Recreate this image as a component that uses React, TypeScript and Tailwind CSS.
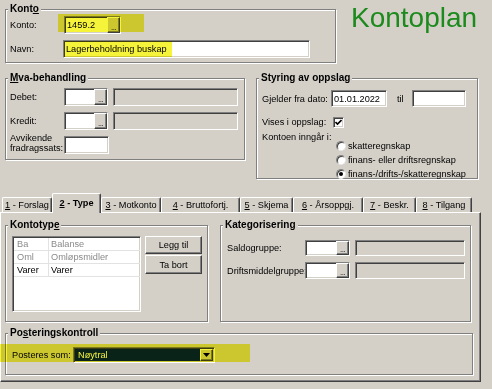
import React from "react";

const sunken =
  "border border-t-[#808080] border-l-[#808080] border-b-white border-r-white shadow-[inset_1px_1px_0_#404040,inset_-1px_-1px_0_#d4d0c8]";
const raised =
  "border border-t-white border-l-white border-b-[#404040] border-r-[#404040] shadow-[inset_-1px_-1px_0_#808080]";

function Group({
  title,
  className,
  children,
}: {
  title: React.ReactNode;
  className: string;
  children?: React.ReactNode;
}) {
  return (
    <div
      className={
        "relative border border-[#808080] shadow-[inset_1px_1px_0_#ffffff,1px_1px_0_#ffffff] " +
        className
      }
    >
      <div className="absolute left-[2px] -top-[7px] bg-[#d4d0c8] px-[2px] font-bold text-[10px] leading-[12px] whitespace-nowrap">
        {title}
      </div>
      {children}
    </div>
  );
}

function DotsBtn() {
  return (
    <div className={raised + " w-[13px] h-full bg-[#d4d0c8] flex items-end justify-center"}>
      <span className="text-[8px] leading-[9px] tracking-[-0.5px]">...</span>
    </div>
  );
}

function Lookup({ className }: { className: string }) {
  return (
    <div className={sunken + " flex bg-white " + className}>
      <div className="flex-1" />
      <DotsBtn />
    </div>
  );
}

function Tab({
  n,
  label,
  className,
  selected,
}: {
  n: string;
  label: string;
  className: string;
  selected?: boolean;
}) {
  if (selected) {
    return (
      <div
        className={
          "relative z-10 -mb-[1px] h-[20px] bg-[#d4d0c8] border-t border-l border-t-white border-l-white border-r border-r-[#404040] shadow-[inset_-1px_0_0_#808080] rounded-t-[2px] flex items-center justify-center font-bold pb-[2px] " +
          className
        }
      >
        <span className="whitespace-nowrap">
          <u>{n}</u> - {label}
        </span>
      </div>
    );
  }
  return (
    <div
      className={
        "h-[15px] border-t border-l border-t-white border-l-white border-r border-r-[#404040] shadow-[inset_-1px_0_0_#808080] rounded-t-[2px] flex items-center justify-center " +
        className
      }
    >
      <span className="whitespace-nowrap">
        <u>{n}</u> - {label}
      </span>
    </div>
  );
}

function Radio({ checked, label }: { checked?: boolean; label: string }) {
  return (
    <div className="flex items-center h-[13px]">
      <div className="w-[10px] h-[10px] rounded-full bg-white border border-t-[#808080] border-l-[#808080] border-b-[#e8e8e8] border-r-[#e8e8e8] shadow-[inset_1px_1px_0_#404040] flex items-center justify-center">
        {checked && <div className="w-[4px] h-[4px] rounded-full bg-black" />}
      </div>
      <span className="ml-[2px] whitespace-nowrap">{label}</span>
    </div>
  );
}

export default function App() {
  return (
    <div className="relative w-[492px] h-[389px] overflow-hidden bg-[#d4d0c8] text-black text-[9.2px] leading-[12px] font-['Liberation_Sans',Arial,sans-serif]">
      {/* Row 1 */}
      <div className="flex items-start">
        <Group
          title={
            <>
              Kont<u>o</u>
            </>
          }
          className="mt-[9px] ml-[5px] w-[331px] h-[54px] pl-[4px] pt-[6px]"
        >
          <div className="flex items-center h-[18px]">
            <span className="w-[54px]">Konto:</span>
            <div className={sunken + " w-[57px] h-[18px] bg-white flex"}>
              <div className="flex-1 flex items-center pl-[2px]">1459.2</div>
              <DotsBtn />
            </div>
          </div>
          <div className="flex items-center h-[18px] mt-[6px]">
            <span className="w-[53px]">Navn:</span>
            <div className={sunken + " w-[247px] h-[18px] bg-white flex items-center pl-[2px]"}>
              Lagerbeholdning buskap
            </div>
          </div>
        </Group>
        <div className="ml-[15px] mt-[4px] text-[28px] leading-[28px] text-[#1c8a1c]">
          Kontoplan
        </div>
      </div>

      {/* Row 2 */}
      <div className="flex items-start mt-[15px]">
        <Group
          title={
            <>
              <u>M</u>va-behandling
            </>
          }
          className="ml-[5px] w-[240px] h-[82px] pl-[4px] pt-[9px]"
        >
          <div className="flex items-center h-[18px]">
            <span className="w-[54px]">Debet:</span>
            <Lookup className="w-[44px] h-[18px]" />
            <div className={sunken + " ml-[5px] w-[125px] h-[18px] bg-[#d4d0c8]"} />
          </div>
          <div className="flex items-center h-[18px] mt-[6px]">
            <span className="w-[54px]">Kredit:</span>
            <Lookup className="w-[44px] h-[18px]" />
            <div className={sunken + " ml-[5px] w-[125px] h-[18px] bg-[#d4d0c8]"} />
          </div>
          <div className="flex items-start mt-[6px]">
            <span className="w-[54px] leading-[10px] -mt-[3px] whitespace-nowrap">
              Avvikende
              <br />
              fradragssats:
            </span>
            <div className={sunken + " w-[45px] h-[18px] bg-white"} />
          </div>
        </Group>

        <Group
          title="Styring av oppslag"
          className="ml-[11px] w-[222px] h-[101px] pl-[5px] pt-[11px]"
        >
          <div className="flex items-center h-[17px]">
            <span className="w-[69px] whitespace-nowrap">Gjelder fra dato:</span>
            <div className={sunken + " w-[56px] h-[17px] bg-white flex items-center pl-[2px]"}>
              01.01.2022
            </div>
            <span className="ml-[10px] w-[15px]">til</span>
            <div className={sunken + " w-[54px] h-[17px] bg-white"} />
          </div>
          <div className="flex items-center h-[12px] mt-[9px]">
            <span className="w-[71px] whitespace-nowrap">Vises i oppslag:</span>
            <div className={sunken + " w-[11px] h-[11px] bg-white flex items-center justify-center"}>
              <svg width="7" height="7" viewBox="0 0 7 7">
                <path d="M0.5 3 L2.5 5 L6.5 1" stroke="black" strokeWidth="1.6" fill="none" />
              </svg>
            </div>
          </div>
          <div className="flex items-start mt-[3px]">
            <span className="w-[74px] whitespace-nowrap">Kontoen inngår i:</span>
            <div className="pt-[8px] flex flex-col gap-[1px]">
              <Radio label="skatteregnskap" />
              <Radio label="finans- eller driftsregnskap" />
              <Radio checked label="finans-/drifts-/skatteregnskap" />
            </div>
          </div>
        </Group>
      </div>

      {/* Tabs */}
      <div className="relative z-10 flex items-end h-[19px] mt-[14px] pl-[2px]">
        <Tab n="1" label="Forslag" className="w-[50px]" />
        <Tab n="2" label="Type" className="w-[49px]" selected />
        <Tab n="3" label="Motkonto" className="w-[60px]" />
        <Tab n="4" label="Bruttofortj." className="w-[79px]" />
        <Tab n="5" label="Skjema" className="w-[53px]" />
        <Tab n="6" label="Årsoppgj." className="w-[70px]" />
        <Tab n="7" label="Beskr." className="w-[53px]" />
        <Tab n="8" label="Tilgang" className="w-[56px]" />
      </div>

      {/* Panel */}
      <div className={raised + " w-[481px] h-[170px] pl-[4px] pt-[12px]"}>
        <div className="flex items-start">
          <Group
            title={
              <>
                Kontotyp<u>e</u>
              </>
            }
            className="w-[203px] h-[97px] pl-[6px] pt-[10px] flex items-start"
          >
            <div className={sunken + " w-[129px] h-[76px] bg-white pt-[1px] pl-[1px]"}>
              <div className="flex h-[13px] border-b border-[#e2e2e2] text-[#8a8a8a]">
                <div className="w-[35px] pl-[3px] border-r border-[#e2e2e2] flex items-center">Ba</div>
                <div className="pl-[2px] flex items-center">Balanse</div>
              </div>
              <div className="flex h-[13px] border-b border-[#e2e2e2] text-[#8a8a8a]">
                <div className="w-[35px] pl-[3px] border-r border-[#e2e2e2] flex items-center">Oml</div>
                <div className="pl-[2px] flex items-center">Omløpsmidler</div>
              </div>
              <div className="flex h-[13px] border-b border-[#e2e2e2]">
                <div className="w-[35px] pl-[3px] border-r border-[#e2e2e2] flex items-center">Varer</div>
                <div className="pl-[2px] flex items-center">Varer</div>
              </div>
            </div>
            <div className="ml-[4px] flex flex-col">
              <div className={raised + " w-[57px] h-[18px] flex items-center justify-center"}>Legg til</div>
              <div className={raised + " w-[57px] h-[19px] mt-[1px] flex items-center justify-center"}>Ta bort</div>
            </div>
          </Group>

          <Group
            title="Kategorisering"
            className="ml-[12px] w-[251px] h-[97px] pl-[6px] pt-[14px]"
          >
            <div className="flex items-center h-[16px]">
              <span className="w-[78px]">Saldogruppe:</span>
              <Lookup className="w-[45px] h-[16px]" />
              <div className={sunken + " ml-[5px] w-[110px] h-[16px] bg-[#d4d0c8]"} />
            </div>
            <div className="flex items-center h-[17px] mt-[6px]">
              <span className="w-[78px] whitespace-nowrap">Driftsmiddelgruppe:</span>
              <Lookup className="w-[45px] h-[17px]" />
              <div className={sunken + " ml-[5px] w-[110px] h-[17px] bg-[#d4d0c8]"} />
            </div>
          </Group>
        </div>

        <Group
          title={
            <>
              Po<u>s</u>teringskontroll
            </>
          }
          className="mt-[11px] w-[468px] h-[42px] pl-[6px] pt-[13px]"
        >
          <div className="flex items-center h-[16px]">
            <span className="w-[61px] whitespace-nowrap">Posteres som:</span>
            <div className={sunken + " w-[142px] h-[16px] bg-white flex p-[1px]"}>
              <div className="flex-1 bg-[#0a246a] text-white flex items-center pl-[3px]">Nøytral</div>
              <div className={raised + " w-[13px] h-full bg-[#d4d0c8] flex items-center justify-center"}>
                <svg width="7" height="4" viewBox="0 0 7 4">
                  <path d="M0 0 H7 L3.5 4 Z" fill="black" />
                </svg>
              </div>
            </div>
          </div>
        </Group>
      </div>

      {/* Highlighter marks */}
      <div className="pointer-events-none absolute left-[58px] top-[14px] w-[86px] h-[18px] bg-[#f6f43a] mix-blend-multiply" />
      <div className="pointer-events-none absolute left-[64px] top-[41px] w-[108px] h-[16px] bg-[#f6f43a] mix-blend-multiply" />
      <div className="pointer-events-none absolute left-0 top-[344px] w-[250px] h-[18px] bg-[#f6f43a] mix-blend-multiply" />
    </div>
  );
}
